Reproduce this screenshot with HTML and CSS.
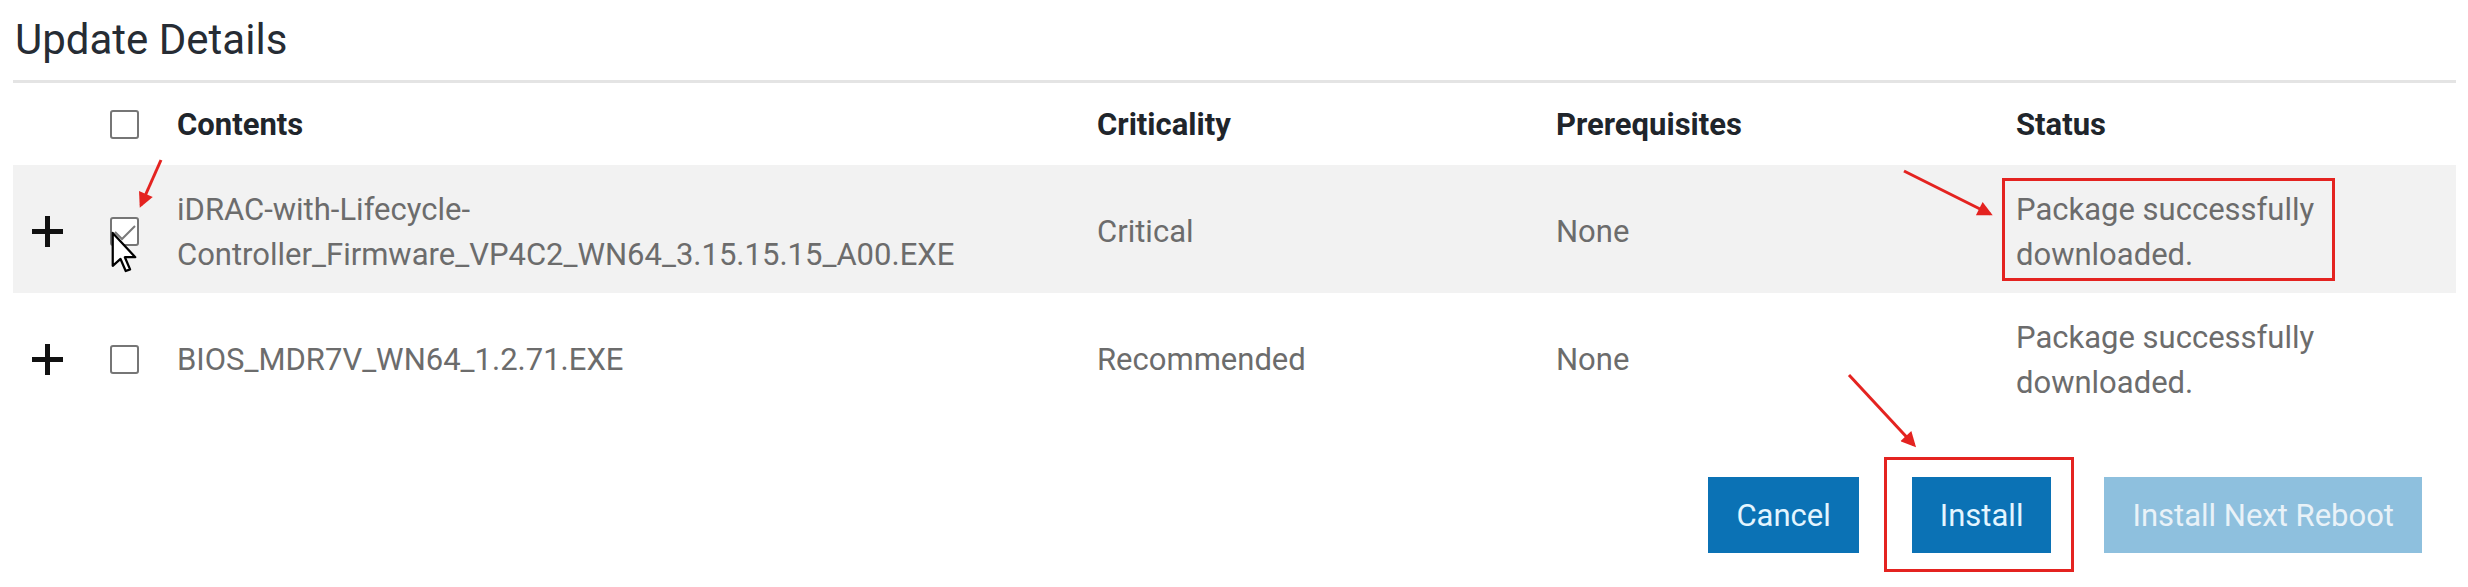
FILE: index.html
```html
<!DOCTYPE html>
<html lang="en">
<head>
    <meta charset="UTF-8">
    <meta name="viewport" content="width=device-width, initial-scale=1.0">
    <title>Update Details</title>
    <link rel="stylesheet" href="styles.css">
</head>
<body>
    <main class="panel">
        <h2 class="panel-title">Update Details</h2>

        <!-- Update table -->
        <div class="updates">
            <div class="row head">
                <span></span>
                <span><span class="check"></span></span>
                <span>Contents</span>
                <span>Criticality</span>
                <span>Prerequisites</span>
                <span>Status</span>
            </div>

            <div class="row selected">
                <span><svg class="expand" width="31" height="31" viewBox="0 0 31 31"><path d="M15.5 0v31M0 15.5h31"/></svg></span>
                <span>
                    <span class="check checked">
                        <svg width="25" height="25" viewBox="0 0 25 25"><path d="M3 13l7 7L23 7"/></svg>
                        <svg class="pointer" width="26" height="42" viewBox="0 0 15 24"><path d="M1 1v19l4.5-4 3 7 2.5-1-3-7H14z"/></svg>
                    </span>
                </span>
                <span>iDRAC-with-Lifecycle-Controller_Firmware_VP4C2_WN64_3.15.15.15_A00.EXE</span>
                <span>Critical</span>
                <span>None</span>
                <span><span class="status highlight">Package successfully downloaded.</span></span>
            </div>

            <div class="row">
                <span><svg class="expand" width="31" height="31" viewBox="0 0 31 31"><path d="M15.5 0v31M0 15.5h31"/></svg></span>
                <span><span class="check"></span></span>
                <span>BIOS_MDR7V_WN64_1.2.71.EXE</span>
                <span>Recommended</span>
                <span>None</span>
                <span><span class="status">Package successfully downloaded.</span></span>
            </div>
        </div>

        <div class="actions">
            <button class="btn">Cancel</button>
            <button class="btn highlight">Install</button>
            <button class="btn disabled">Install Next Reboot</button>
        </div>
    </main>

    <!-- Red callout arrows drawn over the page -->
    <svg class="marks" width="2468" height="587" viewBox="0 0 2468 587">
        <defs>
            <marker id="head" viewBox="0 0 10 10" refX="8" refY="5" markerWidth="6" markerHeight="5" orient="auto">
                <path d="M0 0L10 5L0 10z" fill="#e42320"/>
            </marker>
        </defs>
        <line x1="161" y1="160" x2="141" y2="205" marker-end="url(#head)"/>
        <line x1="1904" y1="171" x2="1990" y2="214" marker-end="url(#head)"/>
        <line x1="1849" y1="375" x2="1914" y2="445" marker-end="url(#head)"/>
    </svg>
</body>
</html>
```

FILE: styles.css
```css
body {
    margin: 0;
    background-color: #fff;
    font-family: Roboto, "Liberation Sans", sans-serif;
    position: relative;
}
.panel {
    padding: 0 12px 34px 13px;
}
.panel-title {
    margin: 0;
    padding: 15px 0 15px 2px;
    font-size: 42px;
    line-height: 50px;
    font-weight: 400;
    color: #262c34;
    border-bottom: 3px solid #e4e4e4;
}
.row {
    display: grid;
    grid-template-columns: 97px 67px 920px 459px 460px 1fr;
    align-items: center;
    box-sizing: border-box;
    height: 128px;
    padding-top: 5px;
    font-size: 31px;
    line-height: 45px;
    color: #6c6c6c;
}
.row.head {
    height: 82px;
    padding-top: 0;
    font-weight: 700;
    color: #20252b;
}
.row.selected {
    background-color: #f2f2f2;
}
.row > span:first-child {
    padding-left: 19px;
    display: flex;
}
.row > span:nth-child(2) {
    display: flex;
}
.expand path {
    stroke: #111;
    stroke-width: 5;
    fill: none;
}
.check {
    position: relative;
    display: block;
    box-sizing: border-box;
    width: 29px;
    height: 29px;
    border: 2px solid #767676;
    border-radius: 3px;
    background-color: #fff;
}
.check.checked svg {
    display: block;
    margin: 0;
}
.check.checked path {
    stroke: #7a7a7a;
    stroke-width: 2;
    fill: none;
}
.check .pointer {
    position: absolute;
    left: -1px;
    top: 12px;
}
.check .pointer path {
    fill: #fff;
    stroke: #000;
    stroke-width: 1.3;
    stroke-linejoin: round;
}
.status {
    display: block;
    position: relative;
    width: 330px;
}
.status.highlight::after {
    content: "";
    position: absolute;
    left: -14px;
    top: -9px;
    width: 333px;
    height: 103px;
    box-sizing: border-box;
    border: 3px solid #e42320;
}
.actions {
    display: flex;
    justify-content: flex-end;
    gap: 53px;
    margin-top: 56px;
    padding-right: 34px;
}
.btn {
    position: relative;
    height: 76px;
    padding: 0 28px;
    border: none;
    border-radius: 0;
    background-color: #0b72b5;
    color: #e3f5ff;
    font-family: Roboto, "Liberation Sans", sans-serif;
    font-size: 31px;
}
.btn.disabled {
    background-color: #8ec0de;
    color: #e9f2f8;
}
.btn.highlight::after {
    content: "";
    position: absolute;
    top: -20px;
    bottom: -19px;
    left: -28px;
    right: -23px;
    border: 3px solid #e42320;
}
.marks {
    position: absolute;
    top: 0;
    left: 0;
    pointer-events: none;
}
.marks line {
    stroke: #e42320;
    stroke-width: 3;
}
```
